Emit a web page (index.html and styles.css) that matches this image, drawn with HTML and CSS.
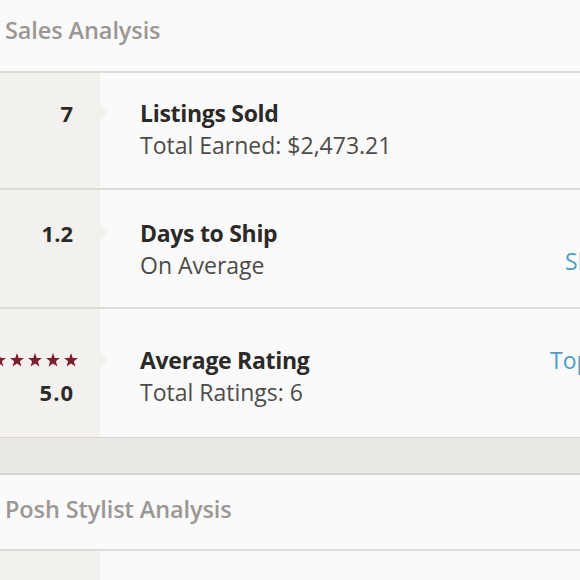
FILE: index.html
```html
<!DOCTYPE html>
<html>
<head>
<meta charset="utf-8">
<link rel="stylesheet" href="styles.css">
</head>
<body>
<div class="page">
  <section class="panel">
    <h2 class="panel-title">Sales Analysis</h2>
    <div class="stat stat-first">
      <div class="stat-value"><div class="num">7</div></div>
      <div class="stat-body">
        <div class="stat-title">Listings Sold</div>
        <div class="stat-sub">Total Earned: $2,473.21</div>
      </div>
      <div class="stat-link"></div>
    </div>
    <div class="stat stat-second">
      <div class="stat-value"><div class="num">1.2</div></div>
      <div class="stat-body">
        <div class="stat-title">Days to Ship</div>
        <div class="stat-sub">On Average</div>
      </div>
      <div class="stat-link link-low"><a href="#">Share</a></div>
    </div>
    <div class="stat stat-third">
      <div class="stat-value">
        <div class="stars">
          <svg viewBox="0 0 24 23" class="star"><polygon points="12,0 15,8.3 24,8.6 17,14.2 19.5,23 12,17.8 4.5,23 7,14.2 0,8.6 9,8.3"/></svg>
          <svg viewBox="0 0 24 23" class="star"><polygon points="12,0 15,8.3 24,8.6 17,14.2 19.5,23 12,17.8 4.5,23 7,14.2 0,8.6 9,8.3"/></svg>
          <svg viewBox="0 0 24 23" class="star"><polygon points="12,0 15,8.3 24,8.6 17,14.2 19.5,23 12,17.8 4.5,23 7,14.2 0,8.6 9,8.3"/></svg>
          <svg viewBox="0 0 24 23" class="star"><polygon points="12,0 15,8.3 24,8.6 17,14.2 19.5,23 12,17.8 4.5,23 7,14.2 0,8.6 9,8.3"/></svg>
          <svg viewBox="0 0 24 23" class="star"><polygon points="12,0 15,8.3 24,8.6 17,14.2 19.5,23 12,17.8 4.5,23 7,14.2 0,8.6 9,8.3"/></svg>
        </div>
        <div class="num num-wide">5.0</div>
      </div>
      <div class="stat-body">
        <div class="stat-title">Average Rating</div>
        <div class="stat-sub">Total Ratings: 6</div>
      </div>
      <div class="stat-link"><a href="#">Top 10%</a></div>
    </div>
  </section>
  <div class="divider"></div>
  <section class="panel">
    <h2 class="panel-title panel-title-second">Posh Stylist Analysis</h2>
    <div class="stat stat-empty">
      <div class="stat-value"></div>
      <div class="stat-body"></div>
    </div>
  </section>
</div>
</body>
</html>
```
FILE: styles.css
```css
html, body {
  margin: 0;
  padding: 0;
}
body {
  width: 580px;
  height: 580px;
  overflow: hidden;
  background: #fbfafa;
  font-family: "Open Sans", "Lato", sans-serif;
}
.page {
  width: 660px;
}
.panel-title {
  margin: 0;
  height: 73px;
  box-sizing: border-box;
  padding: 15px 0 0 5px;
  font-size: 23.5px;
  line-height: 30px;
  font-weight: 600;
  letter-spacing: -0.1px;
  color: #9a9794;
  border-bottom: 2px solid #dddbd8;
}
.panel-title-second {
  height: 76px;
  padding-top: 19px;
}
.stat {
  display: flex;
  box-sizing: border-box;
  border-bottom: 2px solid #dddbd8;
}
.stat-first { height: 117px; }
.stat-second { height: 119px; }
.stat-third { height: 128px; border-bottom: 0; }
.stat-empty { height: 40px; border-bottom: 0; }
.stat-value {
  position: relative;
  width: 100px;
  flex: none;
  background: #f3f1ee;
  box-sizing: border-box;
  padding: 24px 27px 0 0;
  text-align: right;
}
.stat-value::after {
  content: "";
  position: absolute;
  left: 100px;
  top: 32px;
  border-left: 8px solid #f3f1ee;
  border-top: 8px solid transparent;
  border-bottom: 8px solid transparent;
}
.stat-empty .stat-value::after { display: none; }
.stat-second .stat-value,
.stat-second .stat-body { padding-top: 27px; }
.stat-second .stat-value::after { top: 35px; }
.stat-third .stat-value,
.stat-third .stat-body,
.stat-third .stat-link { padding-top: 35px; }
.stat-third .stat-value::after { top: 43px; }
.num {
  font-size: 22px;
  line-height: 32px;
  font-weight: 700;
  color: #2b2a29;
}
.num-wide {
  letter-spacing: 1px;
  margin-right: -1px;
}
.stars {
  height: 32px;
  display: flex;
  justify-content: flex-end;
  align-items: center;
  gap: 4px;
  margin-right: -5px;
}
.star {
  width: 14px;
  height: 13.5px;
  flex: none;
  fill: #7d1f2e;
}
.stat-body {
  flex: none;
  width: 446px;
  box-sizing: border-box;
  padding: 24px 0 0 40px;
}
.stat-title {
  font-size: 23px;
  line-height: 32px;
  font-weight: 700;
  letter-spacing: -0.3px;
  color: #2b2a29;
}
.stat-sub {
  font-size: 23px;
  line-height: 32px;
  color: #4d4c4a;
}
.stat-link {
  width: 100px;
  flex: none;
  padding-top: 24px;
  text-align: center;
  font-size: 23px;
  line-height: 32px;
}
.stat-second .link-low { padding-top: 55px; }
.stat-link a {
  color: #4d9ec4;
  text-decoration: none;
}
.divider {
  height: 35px;
  background: #ebe9e5;
  border-top: 1px solid #d8d5d1;
  border-bottom: 2px solid #d8d5d1;
}
```
